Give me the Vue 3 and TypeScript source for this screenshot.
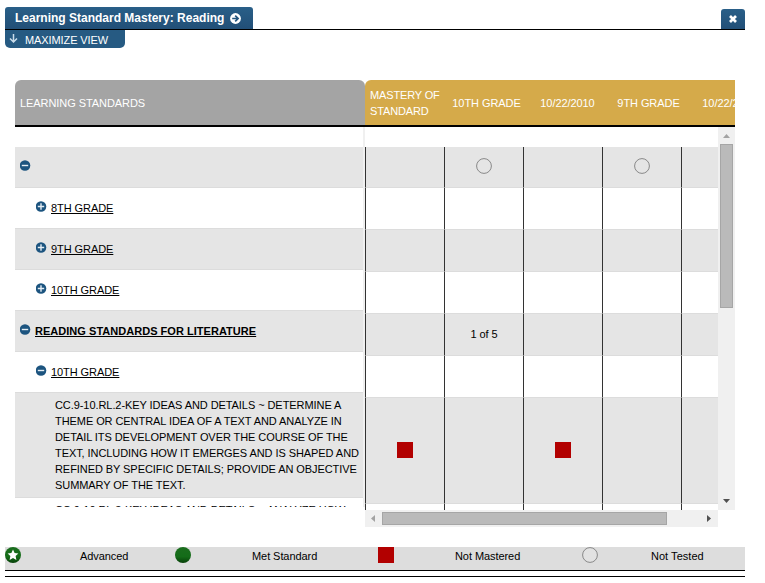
<script setup lang="ts">
interface StandardRow {
  level: number
  open?: boolean
  label?: string
  lines?: string[]
}

type Mark = 'untested' | 'failed' | string

const standards: StandardRow[] = [
  { level: 0, open: true },
  { level: 1, open: false, label: '8TH GRADE' },
  { level: 1, open: false, label: '9TH GRADE' },
  { level: 1, open: false, label: '10TH GRADE' },
  { level: 0, open: true, label: 'READING STANDARDS FOR LITERATURE' },
  { level: 1, open: true, label: '10TH GRADE' },
  {
    level: 2,
    lines: [
      'CC.9-10.RL.2-KEY IDEAS AND DETAILS ~ DETERMINE A',
      'THEME OR CENTRAL IDEA OF A TEXT AND ANALYZE IN',
      'DETAIL ITS DEVELOPMENT OVER THE COURSE OF THE',
      'TEXT, INCLUDING HOW IT EMERGES AND IS SHAPED AND',
      'REFINED BY SPECIFIC DETAILS; PROVIDE AN OBJECTIVE',
      'SUMMARY OF THE TEXT.',
    ],
  },
  { level: 2, lines: ['CC.9-10.RL.3-KEY IDEAS AND DETAILS ~ ANALYZE HOW'] },
]

const columns: string[] = ['10TH GRADE', '10/22/2010', '9TH GRADE', '10/22/2009']

const results: Mark[][] = [
  ['', 'untested', '', 'untested', ''],
  ['', '', '', '', ''],
  ['', '', '', '', ''],
  ['', '', '', '', ''],
  ['', '1 of 5', '', '', ''],
  ['', '', '', '', ''],
  ['failed', '', 'failed', '', ''],
  ['', '', '', '', ''],
]
</script>

<template>
  <main class="page">
    <header class="top">
      <h1 class="tab">
        Learning Standard Mastery: Reading
        <svg class="go" viewBox="0 0 11 11">
          <circle cx="5.5" cy="5.5" r="5.4" fill="#fff" />
          <path d="M2.2 5.5H8M5.2 2.6L8.1 5.5L5.2 8.4" fill="none" stroke="#24567f" stroke-width="1.7" />
        </svg>
      </h1>
      <button class="close" aria-label="Close">
        <svg viewBox="0 0 8 8"><path d="M1 1L7 7M7 1L1 7" stroke="#fff" stroke-width="2.7" /></svg>
      </button>
    </header>
    <button class="maximize">
      <svg viewBox="0 0 9 9"><path d="M4.5 0V7.5M1 4.5L4.5 8L8 4.5" fill="none" stroke="#c9dcea" stroke-width="1.5" /></svg>
      <span>MAXIMIZE VIEW</span>
    </button>

    <section class="grid">
      <div class="left">
        <div class="head head-left">LEARNING STANDARDS</div>
        <div class="tree">
          <div v-for="(row, i) in standards" :key="i" class="node" :class="['level' + row.level, { text: row.lines }]">
            <template v-if="row.lines">
              <div v-for="line in row.lines" :key="line" class="line">{{ line }}</div>
            </template>
            <template v-else>
              <svg class="toggle" viewBox="0 0 11 11">
                <circle cx="5" cy="5.5" r="5.3" fill="#1c547f" />
                <path :d="row.open ? 'M1.8 5.5H8.2' : 'M1.8 5.5H8.2M5 2.2V8.8'" stroke="#e4edf4" stroke-width="1.4" />
              </svg>
              <a v-if="row.label" class="link">{{ row.label }}</a>
            </template>
          </div>
        </div>
      </div>

      <div class="right">
        <div class="head head-right">
          <div class="col first">MASTERY OF<br />STANDARD</div>
          <div v-for="c in columns" :key="c" class="col">{{ c }}</div>
        </div>
        <div class="body">
          <div class="cells">
            <div v-for="(row, i) in results" :key="i" class="row">
              <div v-for="(mark, j) in row" :key="j" class="cell">
                <svg v-if="mark === 'untested'" class="mark" viewBox="0 0 16 16">
                  <circle cx="8" cy="8" r="7.4" fill="none" stroke="#888" />
                </svg>
                <span v-else-if="mark === 'failed'" class="mark failed"></span>
                <span v-else>{{ mark }}</span>
              </div>
            </div>
          </div>
          <div class="vbar">
            <svg class="arrow" viewBox="0 0 17 17"><path d="M5 11L8.5 7L12 11Z" fill="#a3a3a3" /></svg>
            <div class="vthumb"></div>
            <svg class="arrow end" viewBox="0 0 17 17"><path d="M5 6H12L8.5 10Z" fill="#505050" /></svg>
          </div>
        </div>
        <div class="hbar">
          <svg class="arrow" viewBox="0 0 17 17"><path d="M10 5V12L6 8.5Z" fill="#a3a3a3" /></svg>
          <div class="hthumb"></div>
          <svg class="arrow end" viewBox="0 0 17 17"><path d="M6 5V12L10 8.5Z" fill="#505050" /></svg>
        </div>
      </div>
    </section>

    <footer class="legend">
      <div class="item">
        <svg class="mark" viewBox="0 0 16 16">
          <defs>
            <linearGradient id="green" x1="0" y1="0" x2="0" y2="1">
              <stop offset="0" stop-color="#1b6d1e" />
              <stop offset=".6" stop-color="#146c18" />
              <stop offset="1" stop-color="#084009" />
            </linearGradient>
          </defs>
          <circle cx="8" cy="8" r="8" fill="url(#green)" />
          <path d="M8 2.6L9.6 6.1L13.4 6.5L10.6 9.1L11.4 12.9L8 11L4.6 12.9L5.4 9.1L2.6 6.5L6.4 6.1Z" fill="#fff" />
        </svg>
        <span>Advanced</span>
      </div>
      <div class="item">
        <svg class="mark" viewBox="0 0 16 16"><circle cx="8" cy="8" r="8" fill="url(#green)" /></svg>
        <span>Met Standard</span>
      </div>
      <div class="item">
        <span class="mark failed"></span>
        <span>Not Mastered</span>
      </div>
      <div class="item">
        <svg class="mark" viewBox="0 0 16 16"><circle cx="8" cy="8" r="7.4" fill="#e2e2e2" stroke="#888" /></svg>
        <span>Not Tested</span>
      </div>
    </footer>
    <div class="rule"></div>
  </main>
</template>

<style>
body {
  background: #fff;
  overflow: hidden;
}
</style>

<style scoped>
.page {
  box-sizing: border-box;
  width: 765px;
  height: 583px;
  padding: 7px 20px 0 5px;
  font: 11px/16px "Liberation Sans", Arial, sans-serif;
  letter-spacing: -0.07px;
  color: #000;
  overflow: hidden;
}
.top {
  display: flex;
  justify-content: space-between;
  align-items: flex-end;
  height: 22px;
  border-bottom: 1px solid #000;
}
.tab {
  box-sizing: border-box;
  display: flex;
  align-items: center;
  gap: 6px;
  margin: 0;
  width: 248px;
  height: 22px;
  padding-left: 10px;
  border-radius: 3px 3px 0 0;
  background: linear-gradient(#295f88, #224f77);
  color: #fff;
  font-size: 12px;
  font-weight: bold;
  letter-spacing: 0;
  white-space: nowrap;
}
.go {
  width: 11px;
  height: 11px;
}
button {
  border: 0;
  margin: 0;
  padding: 0;
  font: inherit;
}
.close {
  display: flex;
  align-items: center;
  justify-content: center;
  width: 24px;
  height: 20px;
  border-radius: 3px 3px 0 0;
  background: linear-gradient(#295f88, #224f77);
}
.close svg {
  width: 8px;
  height: 8px;
}
.maximize {
  display: flex;
  align-items: center;
  gap: 7px;
  width: 120px;
  height: 18px;
  padding: 2px 0 0 4px;
  box-sizing: border-box;
  border-radius: 0 0 5px 5px;
  background: #265a82;
  color: #fff;
  letter-spacing: -0.1px;
  white-space: nowrap;
}
.maximize svg {
  width: 9px;
  height: 9px;
  margin-top: -3px;
}
.grid {
  display: flex;
  width: 720px;
  height: 447px;
  margin: 32px 0 0 10px;
}
.left {
  width: 350px;
}
.right {
  width: 370px;
}
.head {
  box-sizing: border-box;
  display: flex;
  align-items: center;
  height: 47px;
  border-bottom: 2px solid #000;
  color: #fff;
  white-space: nowrap;
}
.head-left {
  padding-left: 5px;
  background: #a4a4a4;
  border-radius: 6px 6px 0 0;
}
.head-right {
  background: #d5aa4a;
  border-radius: 6px 0 0 0;
  overflow: hidden;
}
.col {
  flex: 0 0 81px;
  text-align: center;
}
.first {
  box-sizing: border-box;
  padding-left: 5px;
  text-align: left;
  letter-spacing: -0.15px;
}
.tree {
  box-sizing: border-box;
  height: 380px;
  padding-top: 20px;
  border-right: 2px solid #f0f0f0;
  overflow: hidden;
}
.node {
  box-sizing: border-box;
  display: flex;
  align-items: flex-start;
  height: 41px;
  padding: 12px 0 0 5px;
  border-bottom: 1px solid #dcdcdc;
  white-space: nowrap;
}
.node:nth-child(odd) {
  background: #e5e5e5;
}
.level1 {
  padding-left: 21px;
}
.text {
  display: block;
  height: 105px;
  padding: 4px 0 0 40px;
}
.toggle {
  width: 11px;
  height: 11px;
  margin: 1px 4px 0 0;
}
.link {
  text-decoration: underline;
}
.level0 .link {
  font-weight: bold;
  letter-spacing: 0.03px;
}
.body {
  display: flex;
  height: 383px;
}
.cells {
  box-sizing: border-box;
  width: 353px;
  padding-top: 20px;
  overflow: hidden;
}
.row {
  display: flex;
  box-sizing: border-box;
  height: 42px;
}
.row:first-child {
  height: 41px;
}
.row:nth-child(n + 7) {
  height: 106px;
}
.row:nth-child(odd) {
  background: #e5e5e5;
}
.cell {
  box-sizing: border-box;
  flex: 0 0 79px;
  display: flex;
  align-items: center;
  justify-content: center;
  padding-bottom: 2px;
  border-left: 1px solid #333;
  border-bottom: 1px solid #dcdcdc;
}
.mark {
  display: block;
  flex: none;
  width: 16px;
  height: 16px;
}
.failed {
  background: #b20000;
}
.vbar {
  display: flex;
  flex-direction: column;
  width: 17px;
  background: #f0f0f0;
}
.hbar {
  display: flex;
  width: 353px;
  height: 17px;
  background: #f0f0f0;
}
.arrow {
  flex: none;
  width: 17px;
  height: 17px;
}
.vthumb,
.hthumb {
  box-sizing: border-box;
  background: #bababa;
  border: 1px solid #a6a6a6;
}
.vthumb {
  width: 13px;
  height: 164px;
  margin-left: 2px;
}
.hthumb {
  width: 285px;
  height: 13px;
  margin-top: 2px;
}
.vbar .end {
  margin-top: auto;
}
.hbar .end {
  margin-left: auto;
}
.legend {
  display: grid;
  grid-template-columns: 170px 203px 204px 163px;
  height: 23px;
  margin-top: 20px;
  background: #ddd;
  border-bottom: 1px solid #000;
}
.item {
  display: flex;
  gap: 59px;
  line-height: 18px;
}
.item:nth-child(2),
.item:nth-child(3) {
  gap: 61px;
}
.item:last-child {
  gap: 53px;
  letter-spacing: 0.03px;
}
.rule {
  height: 1px;
  margin-top: 5px;
  background: #000;
}
</style>
